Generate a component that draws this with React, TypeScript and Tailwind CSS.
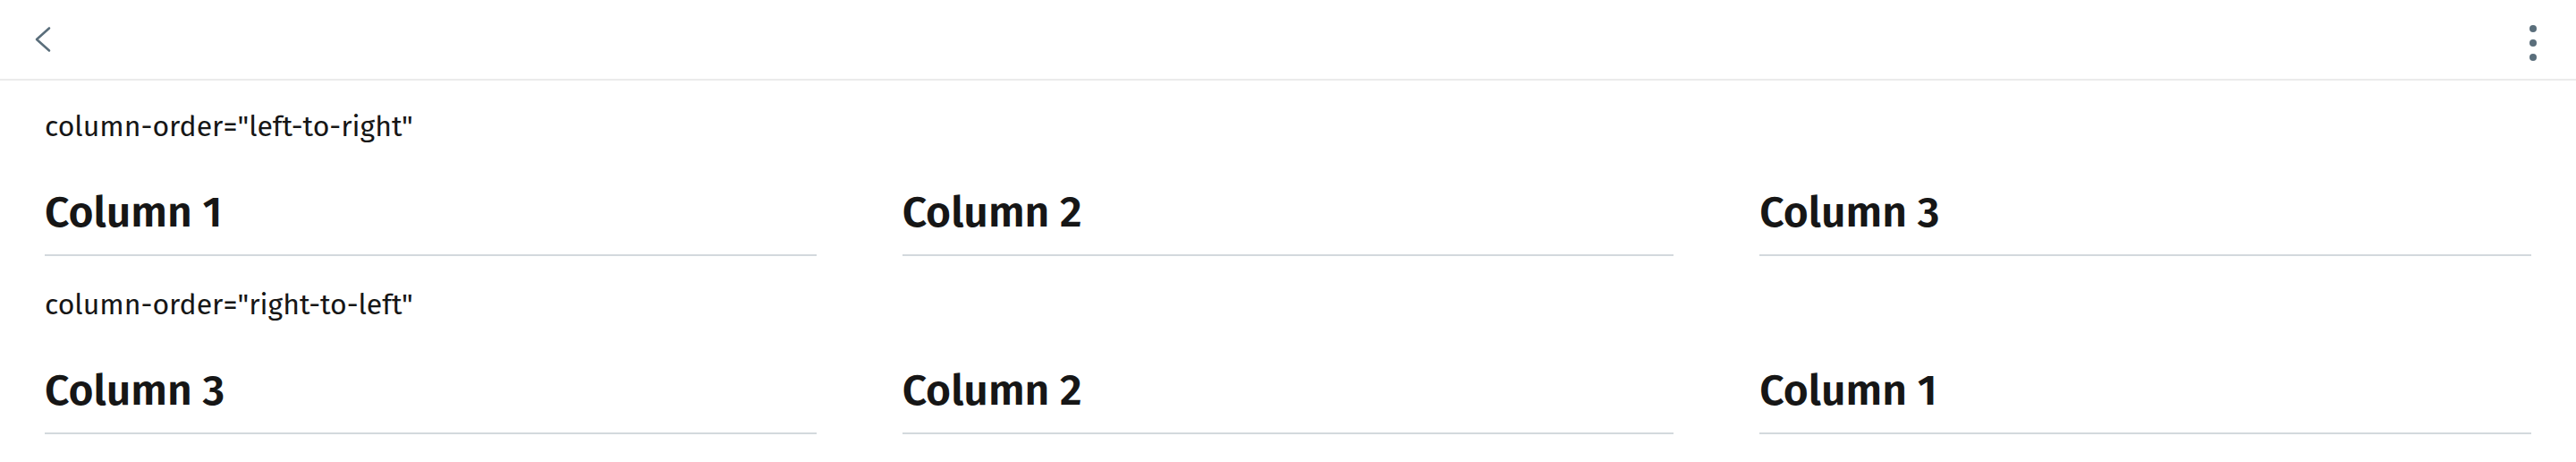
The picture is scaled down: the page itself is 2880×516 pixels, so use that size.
import React from 'react';

/**
 * A demo block that shows a row of three column headings
 */
interface ColumnRowProps {
  label: string;
  columns: string[];
}

const ColumnRow: React.FC<ColumnRowProps> = ({ label, columns }) => (
  <section>
    <p className="text-[32px] leading-[48px] text-[#161616]">{label}</p>
    <div className="grid grid-cols-3 gap-x-[96px] mt-[44px]">
      {columns.map((title) => (
        <h2
          key={title}
          className="text-[48px] leading-[56px] font-semibold text-[#161616] pb-[19px] border-b-2 border-[#d3d9dd]"
        >
          {title}
        </h2>
      ))}
    </div>
  </section>
);

export default function App() {
  return (
    <div className="min-h-screen bg-white font-['Fira_Sans',Lato,'Noto_Sans',sans-serif]">
      <header className="h-[90px] border-b-2 border-[#ebebeb] flex items-center justify-between pl-[38px] pr-[44px]">
        <button aria-label="Back" className="flex items-center">
          <svg width="20" height="30" viewBox="0 0 20 30" fill="none">
            <path
              d="M17 2.5 L3 15 L17 27.5"
              stroke="#5a6e7b"
              strokeWidth="2.6"
              strokeLinecap="round"
              strokeLinejoin="round"
            />
          </svg>
        </button>
        <button aria-label="More" className="flex items-center mt-[8px]">
          <svg width="8" height="40" viewBox="0 0 8 40">
            <circle cx="4" cy="4" r="4" fill="#5a6e7b" />
            <circle cx="4" cy="20" r="4" fill="#5a6e7b" />
            <circle cx="4" cy="36" r="4" fill="#5a6e7b" />
          </svg>
        </button>
      </header>

      <main className="px-[50px] pt-[27px] space-y-[30px]">
        <ColumnRow label={'column-order="left-to-right"'} columns={['Column 1', 'Column 2', 'Column 3']} />
        <ColumnRow label={'column-order="right-to-left"'} columns={['Column 3', 'Column 2', 'Column 1']} />
      </main>
    </div>
  );
}
